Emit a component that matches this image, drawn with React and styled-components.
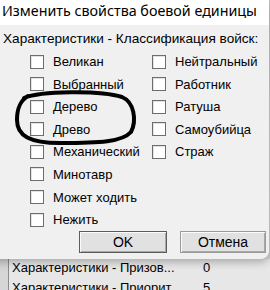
import React from 'react'
import styled, { createGlobalStyle } from 'styled-components'

const Global = createGlobalStyle`
  html, body {
    margin: 0;
    padding: 0;
    background: #d2d2d2;
  }
  #root {
    width: 270px;
    height: 290px;
    overflow: hidden;
  }
`

const Screen = styled.div`
  position: relative;
  width: 270px;
  height: 290px;
  overflow: hidden;
  background: linear-gradient(#c9c9c9, #d6d6d6);
`

const Dialog = styled.div`
  position: relative;
  z-index: 1;
  margin-left: -10px;
  width: 279px;
  height: 259px;
  background: #f0f0f0;
  border-radius: 0 0 8px 8px;
  box-shadow: 0 3px 8px rgba(0, 0, 0, 0.28);
  display: flex;
  flex-direction: column;
`

const TitleBar = styled.div`
  height: 25px;
  background: #ffffff;
  padding-left: 12px;
  font-family: 'Noto Sans', 'Open Sans', sans-serif;
  font-size: 14.3px;
  line-height: 21px;
  color: #000;
  white-space: nowrap;
`

const Body = styled.div`
  padding: 5px 0 0 13px;
  font-family: 'Liberation Sans', Arial, sans-serif;
  font-size: 13px;
  color: #000;
`

const GroupLabel = styled.div`
  font-size: 13.6px;
  line-height: 17px;
  white-space: nowrap;
`

const Options = styled.div`
  display: grid;
  grid-template-columns: 122px 110px;
  grid-template-rows: repeat(8, 22.6px);
  grid-auto-flow: column;
  margin: 7px 0 0 27px;
`

const Option = styled.label`
  display: flex;
  align-items: center;
  align-self: start;
  gap: 9px;
  white-space: nowrap;
  height: 15px;
`

const Box = styled.span`
  width: 12px;
  height: 12px;
  border: 1px solid #6d6d6d;
  background: #fff;
  box-shadow: inset 1px 1px 0 #e3e3e3;
  flex: none;
`

const Buttons = styled.div`
  display: flex;
  justify-content: flex-end;
  gap: 13px;
  padding-right: 3px;
  margin-top: -4px;
`

const Button = styled.button`
  width: ${p => p.$w}px;
  height: 22px;
  padding: 0;
  background: #e1e1e1;
  border: 1px solid ${p => (p.$primary ? '#5c5c5c' : '#9a9a9a')};
  box-shadow: inset 1px 1px 0 #fbfbfb, inset -1px -1px 0 #a8a8a8;
  font-family: 'Liberation Sans', Arial, sans-serif;
  font-size: 14px;
  color: #000;
`

const List = styled.div`
  margin-left: 8px;
  border-left: 1px solid #8c8c8c;
  background: #e7e7e7;
  height: 40px;
  padding-left: 3px;
  font-family: 'Liberation Sans', Arial, sans-serif;
  font-size: 13px;
`

const ListRow = styled.div`
  display: grid;
  grid-template-columns: 191px auto;
  height: 20px;
  line-height: 17px;
  white-space: nowrap;
`

const Scribble = styled.svg`
  position: absolute;
  left: 0;
  top: 0;
  z-index: 2;
  pointer-events: none;
`

const left = ['Великан', 'Выбранный', 'Дерево', 'Древо', 'Механический', 'Минотавр', 'Может ходить', 'Нежить']
const right = ['Нейтральный', 'Работник', 'Ратуша', 'Самоубийца', 'Страж']

const rows = [
  ['Характеристики - Призов...', '0'],
  ['Характеристики - Приорит...', '5'],
]

const App = () => (
  <Screen>
    <Global />
    <Dialog>
      <TitleBar>Изменить свойства боевой единицы</TitleBar>
      <Body>
        <GroupLabel>Характеристики - Классификация войск:</GroupLabel>
        <Options>
          {[...left, ...right].map((name, i) => (
            <Option key={name} style={{ gridRow: (i < 8 ? i : i - 8) + 1, gridColumn: i < 8 ? 1 : 2 }}>
              <Box />
              {name}
            </Option>
          ))}
        </Options>
        <Buttons>
          <Button $w={88} $primary>OK</Button>
          <Button $w={86}>Отмена</Button>
        </Buttons>
      </Body>
    </Dialog>
    <List>
      {rows.map(([k, v]) => (
        <ListRow key={k}>
          <span>{k}</span>
          <span>{v}</span>
        </ListRow>
      ))}
    </List>
    <Scribble width="270" height="290" viewBox="0 0 270 290">
      <path
        d="M 24 98 C 40 91, 100 90, 122 97 C 134 102, 137 120, 131 132 C 122 142, 100 143, 60 143 C 30 143, 17 136, 17 120 C 17 108, 20 101, 28 96"
        fill="none"
        stroke="#000"
        strokeWidth="4"
        strokeLinecap="round"
      />
    </Scribble>
  </Screen>
)

export default App
